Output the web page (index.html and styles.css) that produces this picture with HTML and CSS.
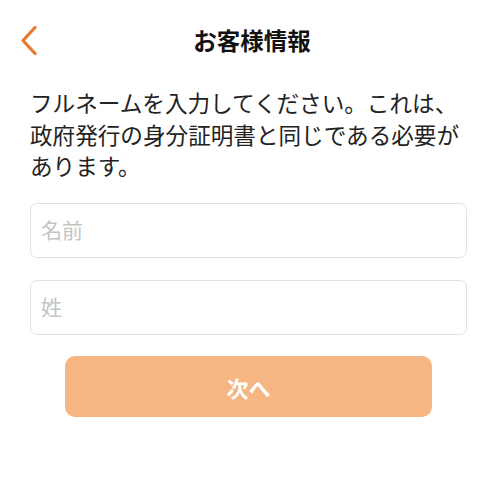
FILE: index.html
```html
<!DOCTYPE html>
<html lang="ja">
<head>
<meta charset="utf-8">
<title>お客様情報</title>
<link rel="stylesheet" href="styles.css">
</head>
<body>
<div class="screen">
  <header class="nav">
    <div class="nav-left">
      <svg class="back" width="18" height="30" viewBox="0 0 18 30" aria-hidden="true">
        <path d="M14 1.5 L2 14.5 L14 27.5" fill="none" stroke="#e8792f" stroke-width="3.2" stroke-linecap="round" stroke-linejoin="round"/>
      </svg>
    </div>
    <h1 class="title">お客様情報</h1>
    <div class="nav-right"></div>
  </header>
  <main class="content">
    <p class="lead">フルネームを入力してください。これは、政府発行の身分証明書と同じである必要があります。</p>
    <div class="field"><input class="input" type="text" placeholder="名前"></div>
    <div class="field"><input class="input" type="text" placeholder="姓"></div>
    <div class="actions"><button class="next" type="button">次へ</button></div>
  </main>
</div>
</body>
</html>
```

FILE: styles.css
```css
* { box-sizing: border-box; }
html, body { margin: 0; padding: 0; background: #ffffff; }
body {
  font-family: "Noto Sans CJK JP", "Noto Sans", sans-serif;
  color: #1e1e1e;
}
.screen { width: 501px; height: 495px; }
.nav {
  height: 82px;
  display: grid;
  grid-template-columns: 1fr auto 1fr;
  align-items: center;
}
.nav-left { padding-left: 21px; display: flex; align-items: center; }
.back { display: block; }
.title {
  margin: 0;
  font-size: 23.5px;
  font-weight: 700;
  color: #111111;
  line-height: 1;
  padding-left: 3px;
}
.content {
  margin-left: 30px;
  width: 437px;
  display: flex;
  flex-direction: column;
  gap: 21.5px;
}
.lead {
  margin: 5px 0 0 0;
  font-size: 22.6px;
  line-height: 31.5px;
  color: #222222;
}
.field { display: flex; }
.input {
  width: 100%;
  height: 55px;
  border: 1px solid #e2e2e2;
  border-radius: 7px;
  padding: 0 10px 3px;
  font-family: "Noto Sans CJK JP", "Noto Sans", sans-serif;
  font-size: 21px;
  color: #222222;
  background: #ffffff;
  outline: none;
}
.input::placeholder { color: #c4c4c4; }
.actions { display: flex; justify-content: center; }
.next {
  width: 367px;
  height: 61px;
  border: none;
  border-radius: 10px;
  background: #f6b684;
  color: #ffffff;
  font-family: "Noto Sans CJK JP", "Noto Sans", sans-serif;
  font-size: 22px;
  font-weight: 700;
  padding: 0;
}
```
